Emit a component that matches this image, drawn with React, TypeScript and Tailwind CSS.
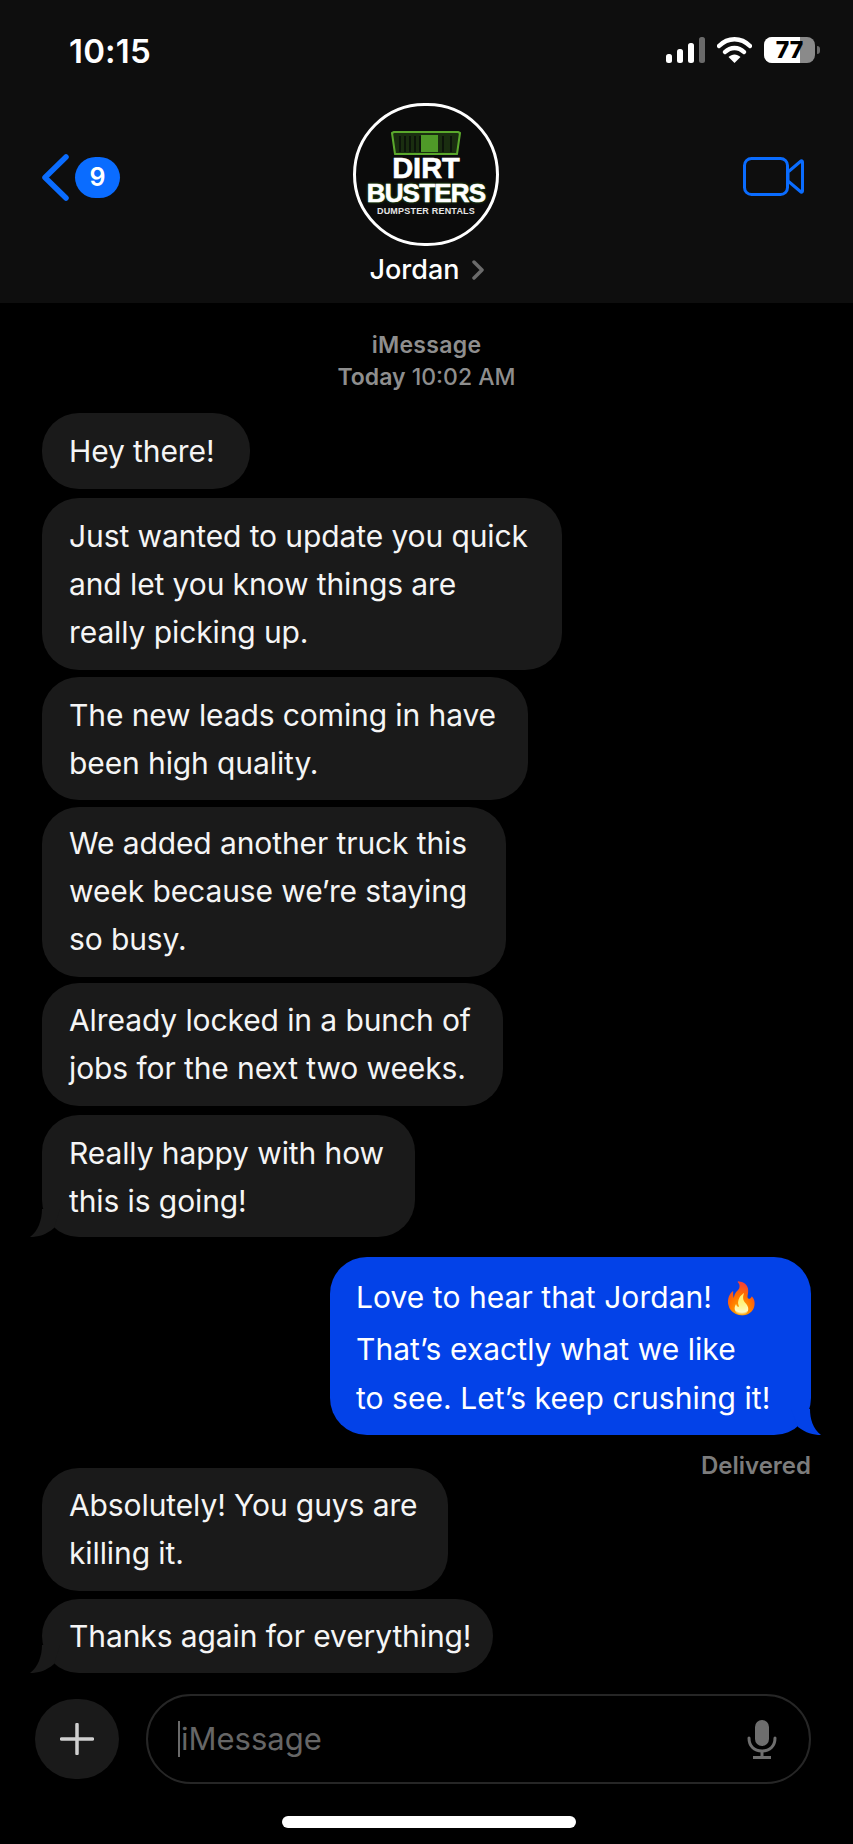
import React from "react";

const FONT = "font-['Inter','Liberation_Sans',sans-serif]";

function Tail({ side, color }: { side: "left" | "right"; color: string }) {
  return side === "left" ? (
    <svg className="absolute bottom-0 left-[-12px]" width="30" height="28" viewBox="0 0 30 28">
      <path d="M12 0 C12 11 8 22 0 28 C8 28 16 26 24 19 L30 0 Z" fill={color} />
    </svg>
  ) : (
    <svg className="absolute bottom-0 right-[-10px]" width="30" height="26" viewBox="0 0 30 26">
      <path d="M19 0 C19 10 22 20 30 26 C22 26 15 24 7 18 L0 0 Z" fill={color} />
    </svg>
  );
}

function In({ lines, cls, tail }: { lines: string[]; cls: string; tail?: boolean }) {
  return (
    <div className={`relative self-start rounded-[37px] bg-[#1a1a1a] pl-[27px] text-[30px] leading-[48px] tracking-[-0.1px] text-[#f5f5f5] ${cls}`}>
      {tail && <Tail side="left" color="#1a1a1a" />}
      <div className="relative whitespace-nowrap">
        {lines.map((l) => (
          <div key={l}>{l}</div>
        ))}
      </div>
    </div>
  );
}

function Logo() {
  return (
    <div className="flex h-[143px] w-[146px] flex-col items-center rounded-full border-[3px] border-white bg-[#0b0b0b] pt-[25px] font-['Liberation_Sans',sans-serif] font-bold text-white">
      <svg width="70" height="24" viewBox="0 0 70 24" className="shrink-0">
        <path d="M1 2 L3 1 L67 1 L69 2 L66 23 L4 23 Z" fill="#1a2e10" stroke="#5aa82c" strokeWidth="2" strokeLinejoin="round" />
        <rect x="30" y="4" width="17" height="17" fill="#4f9a28" />
        <path d="M9 5V21M14 5V21M19 5V21M24 5V21M29 5V21M52 5V21M60 5V21" stroke="#0c140a" strokeWidth="2" />
      </svg>
      <div className="mt-[2px] text-[29px] leading-[22px] [-webkit-text-stroke:0.6px_white]">DIRT</div>
      <div className="mt-[2px] text-[26px] leading-[25px] tracking-[-0.8px] [-webkit-text-stroke:0.6px_white] [text-shadow:0_0_3px_#3d8a1c]">BUSTERS</div>
      <div className="text-[9px] leading-[10px] tracking-[0.2px] text-[#e5e5e5]">DUMPSTER RENTALS</div>
    </div>
  );
}

export default function App() {
  return (
    <div className={`flex h-[1844px] w-[853px] flex-col overflow-hidden bg-black ${FONT}`}>
      <header className="relative h-[303px] shrink-0 bg-[#0e0e0e]">
        <div className="flex items-start justify-between pl-[69px] pr-[33px] pt-[33px]">
          <div className="text-[33px] font-semibold leading-[36px] tracking-[0.2px] text-white">10:15</div>
          <div className="flex items-center gap-[12px] pt-[4px]">
            <svg width="39" height="26" viewBox="0 0 39 26">
              <rect x="0" y="17" width="6" height="9" rx="2.5" fill="#fff" />
              <rect x="11" y="12" width="6" height="14" rx="2.5" fill="#fff" />
              <rect x="22" y="6" width="6" height="20" rx="2.5" fill="#fff" />
              <rect x="33" y="0" width="6" height="26" rx="2.5" fill="#6a6a6a" />
            </svg>
            <svg width="35" height="26" viewBox="0 0 35 26" fill="none">
              <path d="M2 9 C11 0 24 0 33 9" stroke="#fff" strokeWidth="4.5" strokeLinecap="round" />
              <path d="M8 15 C13.5 9.5 21.5 9.5 27 15" stroke="#fff" strokeWidth="4.5" strokeLinecap="round" />
              <path d="M17.5 26 L11.5 20 C15 16.5 20 16.5 23.5 20 Z" fill="#fff" />
            </svg>
            <div className="flex items-center gap-[2px]">
              <div className="relative flex h-[26px] w-[51px] items-center justify-center overflow-hidden rounded-[8px] bg-[#8a8a8a]">
                <div className="absolute inset-y-0 left-0 w-[36px] bg-white" />
                <span className="relative text-[23px] font-extrabold leading-none text-black">77</span>
              </div>
              <div className="h-[8px] w-[3px] rounded-r-full bg-[#6a6a6a]" />
            </div>
          </div>
        </div>
        <div className="absolute left-[41px] top-[154px] flex items-center gap-[6px]">
          <svg width="28" height="47" viewBox="0 0 28 47" fill="none">
            <path d="M25 3 L4 23.5 L25 44" stroke="#0a6cff" strokeWidth="5.5" strokeLinecap="round" strokeLinejoin="round" />
          </svg>
          <div className="flex h-[41px] w-[45px] items-center justify-center rounded-full bg-[#0a6cff] text-[25px] font-semibold text-white">9</div>
        </div>
        <svg className="absolute left-[743px] top-[157px]" width="61" height="39" viewBox="0 0 61 39" fill="none">
          <rect x="1.5" y="1.5" width="43" height="36" rx="7" stroke="#0a6cff" strokeWidth="3" />
          <path d="M45 15 L58 4 Q59.5 3.5 59.5 5 V34 Q59.5 35.5 58 35 L45 24 Z" stroke="#0a6cff" strokeWidth="3" strokeLinejoin="round" />
        </svg>
        <div className="absolute left-[353px] top-[103px] flex flex-col items-center">
          <Logo />
          <div className="mt-[6px] flex items-center gap-[12px] pl-[1px]">
            <span className="text-[27px] font-medium leading-[36px] text-white">Jordan</span>
            <svg width="12" height="20" viewBox="0 0 12 20" fill="none">
              <path d="M2 2 L10 10 L2 18" stroke="#6b6b6b" strokeWidth="3.5" strokeLinecap="round" strokeLinejoin="round" />
            </svg>
          </div>
        </div>
      </header>

      <main className="flex min-h-0 flex-1 flex-col pl-[42px] pr-[42px]">
        <div className="mt-[26px] text-center text-[23px] font-medium leading-[32px] text-[#8e8e8e]">
          <div className="font-semibold tracking-[0.3px]">iMessage</div>
          <div>
            <span className="font-semibold">Today</span> 10:02 AM
          </div>
        </div>
        <In cls="mt-[20px] w-[208px] h-[76px] pt-[14px]" lines={["Hey there!"]} />
        <In cls="mt-[9px] w-[520px] h-[172px] pt-[14px]" lines={["Just wanted to update you quick", "and let you know things are", "really picking up."]} />
        <In cls="mt-[7px] w-[486px] h-[123px] pt-[14px]" lines={["The new leads coming in have", "been high quality."]} />
        <In cls="mt-[7px] w-[464px] h-[170px] pt-[12px]" lines={["We added another truck this", "week because we’re staying", "so busy."]} />
        <In cls="mt-[6px] w-[461px] h-[123px] pt-[13px]" lines={["Already locked in a bunch of", "jobs for the next two weeks."]} />
        <In tail cls="mt-[9px] w-[373px] h-[122px] pt-[14px]" lines={["Really happy with how", "this is going!"]} />
        <div className="relative mt-[20px] h-[178px] w-[481px] self-end rounded-[37px] bg-[#0342e8] pl-[26px] pt-[16px] text-[30px] tracking-[0.05px] text-white">
          <Tail side="right" color="#0342e8" />
          <div className="relative whitespace-nowrap leading-[48px]">
            <div className="h-[52px]">Love to hear that Jordan! <span className="ml-[2px] align-[-1px] font-['Noto_Color_Emoji',sans-serif] text-[31px] leading-none">🔥</span></div>
            <div className="h-[49px]">That’s exactly what we like</div>
            <div>to see. Let’s keep crushing it!</div>
          </div>
        </div>
        <div className="mt-[16px] self-end text-[24px] font-semibold leading-[30px] text-[#7c7c7c]">Delivered</div>
        <In cls="-mt-[13px] w-[406px] h-[123px] pt-[13px]" lines={["Absolutely! You guys are", "killing it."]} />
        <In tail cls="mt-[8px] w-[451px] h-[74px] pt-[13px]" lines={["Thanks again for everything!"]} />
      </main>

      <div className="flex items-center gap-[27px] pl-[35px] pr-[42px]">
        <div className="flex h-[80px] w-[84px] shrink-0 items-center justify-center rounded-full bg-[#1a1a1a]">
          <svg width="34" height="32" viewBox="0 0 34 32" fill="none">
            <path d="M17 1.5V30.5M1.5 16H32.5" stroke="#cfcfcf" strokeWidth="3.5" strokeLinecap="round" />
          </svg>
        </div>
        <div className="flex h-[90px] flex-1 items-center justify-between rounded-full border-2 border-[#262626] pl-[30px] pr-[32px]">
          <div className="flex items-center text-[31px] text-[#666666]">
            <div className="mr-[1px] h-[36px] w-[2px] bg-[#6a6a6a]" />
            <span>iMessage</span>
          </div>
          <svg width="30" height="39" viewBox="0 0 30 39" fill="none">
            <rect x="8" y="0" width="14" height="26" rx="7" fill="#6e6e6e" />
            <path d="M2 18 C2 26 7 31 15 31 C23 31 28 26 28 18" stroke="#6e6e6e" strokeWidth="3" strokeLinecap="round" />
            <path d="M15 31V37M6 37.5H24" stroke="#6e6e6e" strokeWidth="3" />
          </svg>
        </div>
      </div>
      <div className="flex justify-center pb-[16px] pl-[5px] pt-[32px]">
        <div className="h-[12px] w-[294px] rounded-full bg-white" />
      </div>
    </div>
  );
}
